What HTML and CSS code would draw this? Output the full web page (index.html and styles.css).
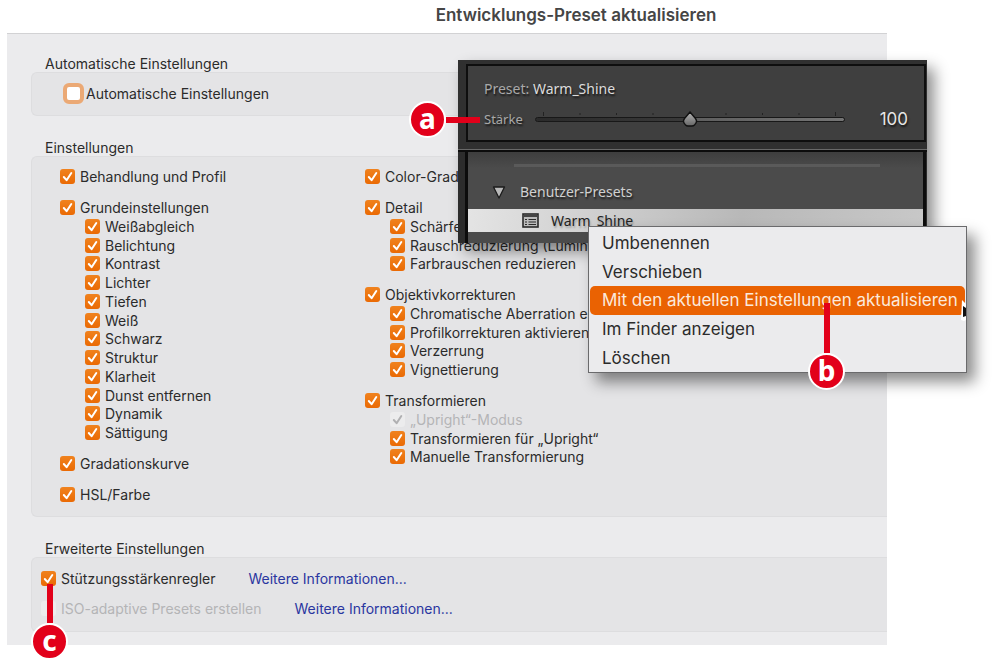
FILE: index.html
```html
<!DOCTYPE html>
<html lang="de">
<head>
<meta charset="utf-8">
<title>Entwicklungs-Preset aktualisieren</title>
<link rel="stylesheet" href="styles.css">
</head>
<body>
<main class="stage">
  <h1 class="title">Entwicklungs-Preset aktualisieren</h1>

  <form class="sheet">
    <section class="section">
      <h2 class="heading">Automatische Einstellungen</h2>
      <div class="box box-auto">
        <label class="option option-focus"><input class="check focused" type="checkbox">Automatische Einstellungen</label>
      </div>
    </section>

    <section class="section">
      <h2 class="heading">Einstellungen</h2>
      <div class="box box-settings">
        <div class="column">
          <label class="option"><input class="check" type="checkbox" checked>Behandlung und Profil</label>
          <div class="group">
            <label class="option"><input class="check" type="checkbox" checked>Grundeinstellungen</label>
            <div class="children">
              <label class="option"><input class="check" type="checkbox" checked>Weißabgleich</label>
              <label class="option"><input class="check" type="checkbox" checked>Belichtung</label>
              <label class="option"><input class="check" type="checkbox" checked>Kontrast</label>
              <label class="option"><input class="check" type="checkbox" checked>Lichter</label>
              <label class="option"><input class="check" type="checkbox" checked>Tiefen</label>
              <label class="option"><input class="check" type="checkbox" checked>Weiß</label>
              <label class="option"><input class="check" type="checkbox" checked>Schwarz</label>
              <label class="option"><input class="check" type="checkbox" checked>Struktur</label>
              <label class="option"><input class="check" type="checkbox" checked>Klarheit</label>
              <label class="option"><input class="check" type="checkbox" checked>Dunst entfernen</label>
              <label class="option"><input class="check" type="checkbox" checked>Dynamik</label>
              <label class="option"><input class="check" type="checkbox" checked>Sättigung</label>
            </div>
          </div>
          <label class="option"><input class="check" type="checkbox" checked>Gradationskurve</label>
          <label class="option"><input class="check" type="checkbox" checked>HSL/Farbe</label>
        </div>
        <div class="column">
          <label class="option"><input class="check" type="checkbox" checked>Color-Grad</label>
          <div class="group">
            <label class="option"><input class="check" type="checkbox" checked>Detail</label>
            <div class="children">
              <label class="option"><input class="check" type="checkbox" checked>Schärfe</label>
              <label class="option"><input class="check" type="checkbox" checked>Rauschreduzierung (Lumina</label>
              <label class="option"><input class="check" type="checkbox" checked>Farbrauschen reduzieren</label>
            </div>
          </div>
          <div class="group">
            <label class="option"><input class="check" type="checkbox" checked>Objektivkorrekturen</label>
            <div class="children">
              <label class="option"><input class="check" type="checkbox" checked>Chromatische Aberration en</label>
              <label class="option"><input class="check" type="checkbox" checked>Profilkorrekturen aktivieren</label>
              <label class="option"><input class="check" type="checkbox" checked>Verzerrung</label>
              <label class="option"><input class="check" type="checkbox" checked>Vignettierung</label>
            </div>
          </div>
          <div class="group">
            <label class="option"><input class="check" type="checkbox" checked>Transformieren</label>
            <div class="children">
              <label class="option option-off"><input class="check" type="checkbox" checked disabled>„Upright“-Modus</label>
              <label class="option"><input class="check" type="checkbox" checked>Transformieren für „Upright“</label>
              <label class="option"><input class="check" type="checkbox" checked>Manuelle Transformierung</label>
            </div>
          </div>
        </div>
      </div>
    </section>

    <section class="section">
      <h2 class="heading">Erweiterte Einstellungen</h2>
      <div class="box box-more">
        <div class="more-row">
          <label class="option"><input class="check" type="checkbox" checked>Stützungsstärkenregler</label>
          <a class="link" href="#">Weitere Informationen...</a>
        </div>
        <div class="more-row">
          <label class="option option-off"><input class="check" type="checkbox" disabled>ISO-adaptive Presets erstellen</label>
          <a class="link" href="#">Weitere Informationen...</a>
        </div>
      </div>
    </section>
  </form>

  <aside class="panel">
    <div class="panel-top">
      <div class="preset-box">
        <div class="preset-name">Preset: <span class="bright">Warm_Shine</span></div>
        <div class="strength">
          <label class="strength-label" for="strength">Stärke</label>
          <div class="slider">
            <svg class="ticks" viewBox="0 0 310 4" preserveAspectRatio="none" aria-hidden="true">
              <path d="M8.500 0v4M45 1v2M81.500 1v2M118 1v2M154.500 0v3M191 1v2M227.500 1v2M264 1v2M300.500 0v4" stroke="#222" stroke-width="1"/>
            </svg>
            <input class="range" id="strength" type="range" min="0" max="200" value="100">
          </div>
          <output class="amount" for="strength">100</output>
        </div>
      </div>
    </div>
    <div class="panel-list">
      <div class="list-body">
        <hr class="rule">
        <div class="folder">
          <svg class="triangle" width="14" height="13" viewBox="0 0 14 13" aria-hidden="true"><path d="M1.500 1h11L7 12z" fill="#b8b8b8" stroke="#1b1b1b" stroke-width="1.300" stroke-linejoin="round"/></svg>
          <span>Benutzer-Presets</span>
        </div>
        <div class="preset-row">
          <svg width="17" height="15" viewBox="0 0 17 15" aria-hidden="true">
            <rect x="1" y="1" width="15" height="13" fill="#bbb" stroke="#2a2a2a" stroke-width="1.600"/>
            <path d="M1 3h15" stroke="#444" stroke-width="2"/>
            <path d="M3 6.500h2M6.500 6.500H14M3 9h2M6.500 9H14M3 11.500h2M6.500 11.500H14" stroke="#2a2a2a" stroke-width="1.200"/>
          </svg>
          <span>Warm_Shine</span>
        </div>
      </div>
    </div>
  </aside>

  <div class="menu">
    <button class="item" type="button">Umbenennen</button>
    <button class="item" type="button">Verschieben</button>
    <button class="item item-active" type="button">Mit den aktuellen Einstellungen aktualisieren</button>
    <button class="item" type="button">Im Finder anzeigen</button>
    <button class="item" type="button">Löschen</button>
    <svg class="cursor" width="5" height="22" viewBox="0 0 5 22" aria-hidden="true"><path d="M1 0L5 4V20L3 21L0 20z" fill="#fff"/><path d="M2 6L5 8V16L2 17z" fill="#111"/></svg>
  </div>

  <div class="callout callout-a"><span class="badge">a</span><span class="stem"></span></div>
  <div class="callout callout-b"><span class="stem"></span><span class="badge">b</span></div>
  <div class="callout callout-c"><span class="stem"></span><span class="badge">c</span></div>
</main>
</body>
</html>
```
FILE: styles.css
```css
* {
  box-sizing: border-box;
}

body {
  margin: 0;
  background: #fff;
  color: #2b2b2b;
  font-family: Inter, "Liberation Sans", sans-serif;
  font-size: 14px;
  line-height: 19px;
}

.stage {
  position: relative;
  padding-bottom: 24px;
}

.title {
  margin: 0;
  padding: 5px 0 8px 152px;
  color: #454545;
  font-size: 17px;
  font-weight: 600;
  line-height: 20px;
  text-align: center;
}

.sheet {
  display: flex;
  flex-direction: column;
  gap: 23px;
  margin: 0 113px 0 7px;
  padding: 21px 0 13px 24px;
  overflow: hidden;
  border-top: 1px solid #d2d2d4;
  background: #ebebed;
}

.heading {
  margin: 0;
  padding-left: 14px;
  font-size: 14px;
  font-weight: 400;
  line-height: 17px;
}

.box {
  border: 1px solid #dddddf;
  border-right: 0;
  border-radius: 6px 0 0 6px;
  background: #e4e4e6;
}

.box-auto {
  padding: 10px 0 11px 31px;
}

.box-settings {
  display: grid;
  grid-template-columns: 305px 1fr;
  padding: 10px 0 12px 28px;
}

.box-more {
  display: flex;
  flex-direction: column;
  gap: 11px;
  padding: 11px 0 13px 9px;
}

.more-row {
  display: flex;
  gap: 33px;
}

.column {
  display: flex;
  flex-direction: column;
  gap: 12px;
}

.children {
  display: grid;
  grid-auto-rows: 19px 18px 19px 19px;
  padding-left: 25px;
}

.option {
  display: flex;
  align-items: center;
  gap: 5px;
  white-space: nowrap;
}

.option-focus {
  gap: 2px;
  line-height: 21px;
}

.option-off {
  color: #b4b4b6;
}

.check {
  appearance: none;
  flex: none;
  width: 15px;
  height: 15px;
  margin: 0;
  border-radius: 3px;
  background: #f3f3f4;
}

.check:checked {
  background:
    url("data:image/svg+xml,%3Csvg xmlns='http://www.w3.org/2000/svg' viewBox='0 0 15 15'%3E%3Cpath d='M3.800 8l2.800 3.200L11.300 4' fill='none' stroke='white' stroke-width='2' stroke-linecap='round' stroke-linejoin='round'/%3E%3C/svg%3E"),
    linear-gradient(#f0821e, #ea6a04);
}

.check:disabled {
  background: #ececed;
}

.check:checked:disabled {
  background:
    url("data:image/svg+xml,%3Csvg xmlns='http://www.w3.org/2000/svg' viewBox='0 0 15 15'%3E%3Cpath d='M3.800 8l2.800 3.200L11.300 4' fill='none' stroke='%23b0b0b2' stroke-width='2' stroke-linecap='round' stroke-linejoin='round'/%3E%3C/svg%3E"),
    #ececed;
}

.focused {
  width: 21px;
  height: 21px;
  border: 4px solid #eba975;
  border-radius: 6px;
  background: #fff;
}

.link {
  color: #2a36a0;
  text-decoration: none;
}

.panel {
  position: absolute;
  top: 60px;
  left: 458px;
  width: 469px;
  background: #2c2c2c;
  box-shadow: 7px 8px 14px rgba(0, 0, 0, 0.45);
  color: #a9a9a9;
  font-family: "Noto Sans", sans-serif;
  font-size: 14px;
  line-height: 20px;
  text-shadow: 1px 2px 2px rgba(0, 0, 0, 0.7);
}

.panel-top {
  padding: 4px 1px 7px 8px;
  border-bottom: 1px solid #686868;
  background: #303030;
}

.preset-box {
  padding: 13px 16px 11px;
  border: 2px solid #0e0e0e;
  background: #3f3f3f;
}

.bright {
  color: #dcdcdc;
}

.strength {
  display: flex;
  align-items: center;
  padding-top: 10px;
}

.strength-label {
  font-size: 13px;
}

.slider {
  position: relative;
  width: 310px;
  height: 20px;
  margin-left: 12px;
}

.ticks {
  position: absolute;
  top: 3px;
  left: 0;
  width: 100%;
  height: 4px;
}

.range {
  position: absolute;
  inset: 0;
  width: 100%;
  height: 20px;
  margin: 0;
  appearance: none;
  background: none;
}

.range::-webkit-slider-runnable-track {
  height: 5px;
  border: 1px solid #181818;
  border-radius: 3px;
  background: linear-gradient(to right, #2b2b2b, #3a3a3a 50%, #5e5e5e 50%, #747474);
}

.range::-webkit-slider-thumb {
  appearance: none;
  width: 16px;
  height: 16px;
  margin-top: -7px;
  background: url("data:image/svg+xml,%3Csvg xmlns='http://www.w3.org/2000/svg' viewBox='0 0 16 16'%3E%3Cdefs%3E%3ClinearGradient id='g' x2='0' y2='1'%3E%3Cstop stop-color='%23b5b5b5'/%3E%3Cstop offset='1' stop-color='%23666'/%3E%3C/linearGradient%3E%3C/defs%3E%3Cpath d='M8 1L13.500 7.500Q16 11 12.500 14Q11.500 15 10 15H6Q4.500 15 3.500 14Q0 11 2.500 7.500z' fill='url(%23g)' stroke='%23111' stroke-width='1.400'/%3E%3C/svg%3E");
}

.amount {
  margin-left: auto;
  color: #e6e6e6;
  font-family: Inter, sans-serif;
  font-size: 17px;
}

.panel-list {
  padding: 0 1px 0 7px;
  border-top: 2px solid #0c0c0c;
}

.list-body {
  padding: 12px 0 11px;
  border: solid #0c0c0c;
  border-width: 0 3px;
  background: linear-gradient(#3e3e3e, #4b4b4b 16px);
}

.rule {
  height: 3px;
  margin: 0 43px 0 46px;
  border: 0;
  background: #5a5a5a;
}

.folder {
  display: flex;
  align-items: center;
  gap: 14px;
  padding: 15px 0 7px 24px;
  color: #d0d0d0;
}

.preset-row {
  display: flex;
  align-items: center;
  gap: 12px;
  height: 23px;
  padding-left: 54px;
  background: linear-gradient(100deg, #e4e4e4, #b8b8b8 60%, #c8c8c8);
  color: #222;
  text-shadow: 1px 2px 2px rgba(0, 0, 0, 0.25);
}

.menu {
  position: absolute;
  top: 226px;
  left: 588px;
  display: grid;
  grid-template-columns: minmax(0, 1fr);
  grid-template-rows: 29px 28px 29px 29px 28px;
  width: 379px;
  padding: 2px 1px 0;
  border: 1px solid #6a6a6c;
  background: #ebebed;
  box-shadow: 8px 9px 14px rgba(0, 0, 0, 0.45);
}

.item {
  padding: 0 4px 0 12px;
  border: 0;
  border-radius: 5px;
  background: none;
  color: #2b2b2b;
  font: inherit;
  font-size: 17px;
  text-align: left;
  white-space: nowrap;
}

.item-active {
  background: #ea6202;
  color: #fbe9dc;
}

.cursor {
  position: absolute;
  top: 73px;
  right: 0;
}

.callout {
  position: absolute;
  display: flex;
  align-items: center;
  color: #fff;
  font-family: "Noto Sans", sans-serif;
  font-size: 28px;
  font-weight: 700;
}

.callout-a {
  top: 101px;
  left: 409px;
}

.callout-b {
  top: 303px;
  left: 808px;
  flex-direction: column;
}

.callout-c {
  top: 584px;
  left: 31px;
  flex-direction: column;
}

.badge {
  width: 37px;
  height: 37px;
  border: 2px solid #fff;
  border-radius: 50%;
  background: #e2001a;
  line-height: 30px;
  text-align: center;
}

.stem {
  width: 6px;
  height: 50px;
  background: #e2001a;
}

.callout-a .stem {
  width: 34px;
  height: 6px;
}

.callout-c .stem {
  height: 39px;
}
```
